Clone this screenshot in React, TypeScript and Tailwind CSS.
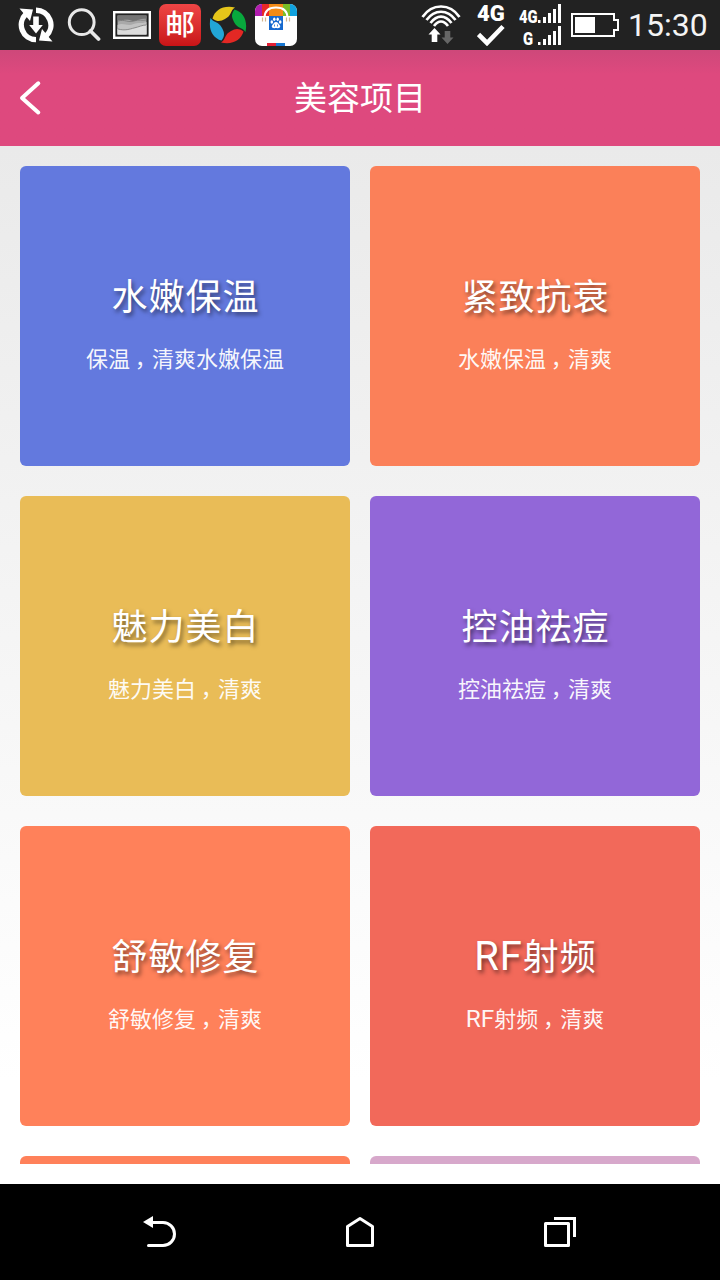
import React from "react";

type Tile = { title: string; subtitle: string; color: string };

const tiles: Tile[] = [
  { title: "水嫩保温", subtitle: "保温，清爽水嫩保温", color: "bg-[#6379de]" },
  { title: "紧致抗衰", subtitle: "水嫩保温，清爽", color: "bg-[#fb8059]" },
  { title: "魅力美白", subtitle: "魅力美白，清爽", color: "bg-[#e9bc57]" },
  { title: "控油祛痘", subtitle: "控油祛痘，清爽", color: "bg-[#9267d8]" },
  { title: "舒敏修复", subtitle: "舒敏修复，清爽", color: "bg-[#ff815a]" },
  { title: "RF射频", subtitle: "RF射频，清爽", color: "bg-[#f2695a]" },
  { title: "", subtitle: "", color: "bg-[#ff815a]" },
  { title: "", subtitle: "", color: "bg-[#d7a8cb]" },
];

function MixedText({ text }: { text: string }) {
  return text.split(/([A-Za-z]+|，)/).map((part, i) => {
    if (part === "，") {
      return (
        <span key={i} className="relative top-[6px] -left-px font-['Noto_Sans_CJK_TC']">
          {part}
        </span>
      );
    }
    if (/^[A-Za-z]+$/.test(part)) {
      return (
        <span key={i} className="text-[1.11em] leading-none">
          {part}
        </span>
      );
    }
    return part;
  });
}

function TileCard({ tile }: { tile: Tile }) {
  return (
    <div className={`flex h-[300px] flex-col items-center rounded-md pt-[107px] ${tile.color}`}>
      {tile.title && (
        <>
          <h2 className="h-[50px] pl-px text-[36px] leading-[50px] tracking-[1px] whitespace-nowrap text-white [text-shadow:2px_3px_4px_rgba(0,0,0,0.5)]">
            <MixedText text={tile.title} />
          </h2>
          <p className="mt-[18px] h-8 text-[22px] leading-8 whitespace-nowrap text-white/95">
            <MixedText text={tile.subtitle} />
          </p>
        </>
      )}
    </div>
  );
}

function SyncIcon() {
  return (
    <svg className="ml-[18px] h-9 w-9 shrink-0" viewBox="0 0 36 36" fill="none">
      <path d="M8 7A14.800 14.800 0 0 0 18 32.600" stroke="#fff" strokeWidth="5.400" />
      <path d="M18 3.200A14.800 14.800 0 0 1 28 29" stroke="#fff" strokeWidth="5.400" />
      <path d="M1.500 1.500L15 2.500 12 14zM34.500 34.500L21 33.500 24 22z" fill="#fff" />
      <path d="M15.200 9.500h5.600V18h4L18 26.500 11.200 18h4z" fill="#fff" />
    </svg>
  );
}

function SearchIcon() {
  return (
    <svg className="ml-[13px] h-[34px] w-[34px] shrink-0" viewBox="0 0 34 34" fill="none" stroke="#e8e8e8">
      <circle cx="14.700" cy="14.200" r="12.400" strokeWidth="3" />
      <path d="M23.500 23l8 8" strokeWidth="3.800" strokeLinecap="round" />
    </svg>
  );
}

function PhotoIcon() {
  return (
    <svg className="ml-[12px] h-7 w-[38px] shrink-0" viewBox="0 0 38 28">
      <rect x="1.200" y="1.200" width="35.600" height="25.600" fill="#222" stroke="#fff" strokeWidth="2.400" />
      <rect x="4.500" y="4.500" width="29" height="19" fill="#a9a9a9" />
      <path d="M4.500 4.500h29V8c-8-1-10 4-17 1-5-1-8 1-12 0z" fill="#747474" />
      <path d="M4.500 14c6-3 10 2 16-1 5-2 8 0 13-2v12.500h-29z" fill="#c2c2c2" />
      <path d="M4.500 18c7 2 12 0 16-1 5-1 8-3 13-3v9.500h-29z" fill="#ddd" />
      <path d="M5 10c7-2 10 2 16 0 5-2 8 0 12-1M5 18c7 2 12 0 16-1 5-1 8-3 12-3" fill="none" stroke="#777" strokeWidth="0.800" />
    </svg>
  );
}

function MailIcon() {
  return (
    <div className="ml-2 flex h-[42px] w-[42px] shrink-0 items-center justify-center rounded-[7px] bg-linear-to-b from-[#ee4545] to-[#c91316]">
      <span className="relative top-px scale-y-[0.93] text-[30px] leading-none font-medium text-white">邮</span>
    </div>
  );
}

function SwirlIcon() {
  return (
    <svg className="ml-2 h-[38px] w-[38px] shrink-0" viewBox="0 0 38 38">
      <path d="M3.500 12.500C6 4 14-1 26 1.500c-5 3-3 8-10 11.500-4 2-7 3.500-12.500-.5z" fill="#e5c51a" />
      <path d="M25.500 3.500C34 6 39 14 36.500 26c-3-5-8-3-11.500-10-2-4-3.500-7 .5-12.500z" fill="#08a83d" />
      <path d="M34.500 25.500C32 34 24 39 12 36.500c5-3 3-8 10-11.500 4-2 7-3.500 12.500.5z" fill="#e32824" />
      <path d="M12.500 34.500C4 32-1 24 1.500 12c3 5 8 3 11.500 10 2 4 3.500 7-.5 12.500z" fill="#22a6d5" />
    </svg>
  );
}

function BagIcon() {
  return (
    <svg className="ml-2 h-[42px] w-[42px] shrink-0 rounded-[7px]" viewBox="0 0 42 42">
      <rect width="42" height="42" fill="#fff" />
      <path d="M0 0h7v12H0z" fill="#b11caf" />
      <path d="M7 0h7v12H7z" fill="#e92a25" />
      <path d="M14 0h14v12H14z" fill="#f38b16" />
      <path d="M28 0h7v12h-7z" fill="#79bd27" />
      <path d="M35 0h7v12h-7z" fill="#10a2df" />
      <path d="M9.500 14C9.500 7 14 3.500 21 3.500S32.500 7 32.500 14" fill="none" stroke="#fff" strokeWidth="2" />
      <path d="M7.500 13.500v4M10.500 13.500v4M31.500 13.500v4M34.500 13.500v4" stroke="#d3b58e" strokeWidth="1.200" />
      <rect x="14" y="12" width="14" height="14" fill="#1769ce" />
      <g fill="#fff">
        <ellipse cx="16.800" cy="18" rx="1.300" ry="1.700" />
        <ellipse cx="19.300" cy="15.300" rx="1.200" ry="1.700" />
        <ellipse cx="22.700" cy="15.300" rx="1.200" ry="1.700" />
        <ellipse cx="25.200" cy="18" rx="1.300" ry="1.700" />
        <path d="M21 18c2 0 2.500 2 4 3.500 1 2-1 3-4 2.500-3 .5-5-.5-4-2.500C18.500 20 19 18 21 18z" />
      </g>
      <path d="M19.500 20.500v2M22.500 20.500v2" stroke="#1769ce" strokeWidth="0.800" />
      <path d="M12 39h9v3h-9z" fill="#e32035" />
      <path d="M21 39h9v3h-9z" fill="#1777d2" />
    </svg>
  );
}

function WifiIcon() {
  return (
    <svg className="h-10 w-10 shrink-0" viewBox="0 0 40 40" fill="none">
      <g stroke="#fff" strokeWidth="2.700">
        <path d="M1.500 12C11-2 29-2 38.500 12" />
        <path d="M5.500 15C13.500 4 26.500 4 34.500 15" />
        <path d="M9.500 18C16 9.500 24 9.500 30.500 18" />
        <path d="M13 21C17.500 15 22.500 15 27 21" />
      </g>
      <path d="M13.500 23l6 6.500h-3.200V37h-5.600v-7.500H7.500z" fill="#fff" />
      <path d="M26.500 39l-6-6.500h3.200V26h5.600v6.500h3.200z" fill="#666" />
    </svg>
  );
}

function NetworkCheck() {
  return (
    <div className="ml-4 flex h-[42px] w-[30px] shrink-0 flex-col">
      <span className="h-[18px] font-[Roboto] text-[22px] leading-[19px] font-black text-white">4G</span>
      <svg className="mt-[2px] h-[22px] w-[30px]" viewBox="0 0 30 22">
        <path d="M1.500 10.500l8.500 8.500L26 2.500" fill="none" stroke="#fff" strokeWidth="4.600" />
      </svg>
    </div>
  );
}

function SignalRow({ label }: { label: string }) {
  return (
    <div className="flex h-5 items-end">
      <span className="flex w-5 justify-center font-[Roboto] text-[18px] leading-[13px] font-black text-white">
        <span className="scale-x-[0.82]">{label}</span>
      </span>
      <svg className="h-[19px] w-6" viewBox="0 0 24 19" fill="#fff">
        <path d="M0 16h2.500v3H0zM5 13h3v6H5zM10 9h3v10h-3zM15 5h3v14h-3zM20 0h3v19h-3z" />
      </svg>
    </div>
  );
}

function BatteryIcon() {
  return (
    <svg className="ml-[9px] h-6 w-12 shrink-0" viewBox="0 0 48 24">
      <path d="M1 1h42v6h4v10h-4v6H1z" fill="none" stroke="#fff" strokeWidth="2" />
      <path d="M4 4h20v16H4z" fill="#fff" />
    </svg>
  );
}

function StatusBar() {
  return (
    <div className="flex h-[50px] shrink-0 items-center justify-between bg-[#222]">
      <div className="flex items-center">
        <SyncIcon />
        <SearchIcon />
        <PhotoIcon />
        <MailIcon />
        <SwirlIcon />
        <BagIcon />
      </div>
      <div className="flex items-center pr-[10px]">
        <WifiIcon />
        <NetworkCheck />
        <div className="ml-[11px] flex w-11 shrink-0 flex-col gap-[2px] pb-[2px]">
          <SignalRow label="4G" />
          <SignalRow label="G" />
        </div>
        <BatteryIcon />
        <span className="ml-[9px] w-[82px] font-[Roboto] text-[32px] leading-none text-[#f4f4f4]">15:30</span>
      </div>
    </div>
  );
}

function TitleBar() {
  return (
    <header className="grid h-24 shrink-0 grid-cols-[1fr_auto_1fr] items-center bg-linear-to-b from-[#ce487a] via-[#de497e] via-25% to-[#de497e]">
      <svg className="ml-[18px] h-9 w-6" viewBox="0 0 24 36" fill="none">
        <path d="M20.300 3.300L4 18l16.300 14.500" stroke="#fff" strokeWidth="4" strokeLinecap="round" strokeLinejoin="round" />
      </svg>
      <h1 className="text-[33px] leading-none text-white">美容项目</h1>
    </header>
  );
}

function NavBar() {
  return (
    <nav className="flex h-24 shrink-0 items-center justify-between bg-black px-[142px]">
      <svg className="h-9 w-9" viewBox="0 0 36 36" fill="none">
        <path d="M9 8.500h12a11.500 11.500 0 0 1 0 23H6.500" stroke="#fff" strokeWidth="3" strokeLinecap="round" />
        <path d="M1 8l10-6v12z" fill="#fff" />
      </svg>
      <svg className="h-9 w-9" viewBox="0 0 36 36" fill="none">
        <path d="M5.500 12.500L18 4.500l12.500 8v19h-25z" stroke="#fff" strokeWidth="3" strokeLinejoin="round" />
      </svg>
      <svg className="h-9 w-9" viewBox="0 0 36 36" fill="none">
        <path d="M3.500 9.500h23v22h-23z" stroke="#fff" strokeWidth="3" strokeLinejoin="round" />
        <path d="M12 4.500h20.500V23" stroke="#fff" strokeWidth="3" />
      </svg>
    </nav>
  );
}

export default function App() {
  return (
    <div className="flex h-[1280px] w-[720px] flex-col overflow-hidden font-['Roboto','Noto_Sans_CJK_SC',sans-serif]">
      <StatusBar />
      <TitleBar />
      <main className="h-[1038px] shrink-0 bg-linear-to-b from-[#eaeaea] to-white to-90% px-5 pt-5">
        <div className="grid h-[998px] grid-cols-2 content-start gap-x-5 gap-y-[30px] overflow-hidden">
          {tiles.map((tile, i) => (
            <TileCard key={i} tile={tile} />
          ))}
        </div>
      </main>
      <NavBar />
    </div>
  );
}
